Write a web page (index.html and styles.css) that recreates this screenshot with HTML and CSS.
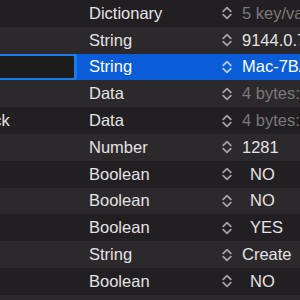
FILE: index.html
```html
<!DOCTYPE html>
<html>
<head>
<meta charset="utf-8">
<link rel="stylesheet" href="styles.css">
</head>
<body>
<div class="table">
  <div class="row even"><div class="key"></div><div class="type">Dictionary</div><div class="step"><svg viewBox="0 0 10 14"><path d="M1.2 5.4 L5 1.6 L8.8 5.4 M1.2 8.6 L5 12.4 L8.8 8.6"/></svg></div><div class="val dim">5 key/value pairs</div></div>
  <div class="row odd"><div class="key"></div><div class="type">String</div><div class="step"><svg viewBox="0 0 10 14"><path d="M1.2 5.4 L5 1.6 L8.8 5.4 M1.2 8.6 L5 12.4 L8.8 8.6"/></svg></div><div class="val">9144.0.7</div></div>
  <div class="row sel"><div class="key"><div class="field"></div></div><div class="type">String</div><div class="step"><svg viewBox="0 0 10 14"><path d="M1.2 5.4 L5 1.6 L8.8 5.4 M1.2 8.6 L5 12.4 L8.8 8.6"/></svg></div><div class="val">Mac-7BA5B2D9E42DDD94</div></div>
  <div class="row odd"><div class="key"></div><div class="type">Data</div><div class="step"><svg viewBox="0 0 10 14"><path d="M1.2 5.4 L5 1.6 L8.8 5.4 M1.2 8.6 L5 12.4 L8.8 8.6"/></svg></div><div class="val dim">4 bytes: 0x00000000</div></div>
  <div class="row even"><div class="key"><span class="keytext">Lock</span></div><div class="type">Data</div><div class="step"><svg viewBox="0 0 10 14"><path d="M1.2 5.4 L5 1.6 L8.8 5.4 M1.2 8.6 L5 12.4 L8.8 8.6"/></svg></div><div class="val dim">4 bytes: 0x00000000</div></div>
  <div class="row odd"><div class="key"></div><div class="type">Number</div><div class="step"><svg viewBox="0 0 10 14"><path d="M1.2 5.4 L5 1.6 L8.8 5.4 M1.2 8.6 L5 12.4 L8.8 8.6"/></svg></div><div class="val">1281</div></div>
  <div class="row even"><div class="key"></div><div class="type">Boolean</div><div class="step"><svg viewBox="0 0 10 14"><path d="M1.2 5.4 L5 1.6 L8.8 5.4 M1.2 8.6 L5 12.4 L8.8 8.6"/></svg></div><div class="val bool">NO</div></div>
  <div class="row odd"><div class="key"></div><div class="type">Boolean</div><div class="step"><svg viewBox="0 0 10 14"><path d="M1.2 5.4 L5 1.6 L8.8 5.4 M1.2 8.6 L5 12.4 L8.8 8.6"/></svg></div><div class="val bool">NO</div></div>
  <div class="row even"><div class="key"></div><div class="type">Boolean</div><div class="step"><svg viewBox="0 0 10 14"><path d="M1.2 5.4 L5 1.6 L8.8 5.4 M1.2 8.6 L5 12.4 L8.8 8.6"/></svg></div><div class="val bool">YES</div></div>
  <div class="row odd"><div class="key"></div><div class="type">String</div><div class="step"><svg viewBox="0 0 10 14"><path d="M1.2 5.4 L5 1.6 L8.8 5.4 M1.2 8.6 L5 12.4 L8.8 8.6"/></svg></div><div class="val">Create</div></div>
  <div class="row even"><div class="key"></div><div class="type">Boolean</div><div class="step"><svg viewBox="0 0 10 14"><path d="M1.2 5.4 L5 1.6 L8.8 5.4 M1.2 8.6 L5 12.4 L8.8 8.6"/></svg></div><div class="val bool">NO</div></div>
  <div class="row odd short"></div>
</div>
</body>
</html>
```

FILE: styles.css
```css
html, body {
  margin: 0;
  padding: 0;
  background: #221f22;
  overflow: hidden;
  width: 300px;
  height: 300px;
}
.table {
  font-family: "Liberation Sans", Arial, sans-serif;
  font-size: 16.5px;
  color: #e4e2e4;
  height: 300px;
  overflow: hidden;
}
.row {
  display: grid;
  grid-template-columns: 78px 133px 31px 1fr;
  height: 26.8px;
  align-items: center;
  white-space: nowrap;
}
.short { height: 5.2px; }
.even { background: #221f22; }
.odd { background: #2c292c; }
.sel { background: #0a5cd8; color: #ffffff; }
.key {
  height: 100%;
  position: relative;
  overflow: hidden;
  display: flex;
  align-items: center;
}
.keytext {
  margin-left: -25px;
}
.field {
  position: absolute;
  left: -4px;
  right: 1px;
  top: -1px;
  bottom: -1px;
  background: #1e1d1d;
  border: 3px solid #1a7ceb;
  border-radius: 4px;
  box-sizing: border-box;
}
.type {
  padding-left: 11px;
  overflow: hidden;
}
.step {
  padding-left: 11px;
  display: flex;
  align-items: center;
}
.step svg {
  width: 10px;
  height: 14px;
  fill: none;
  stroke: #a3a1a3;
  stroke-width: 1.8;
  stroke-linecap: round;
  stroke-linejoin: round;
}
.sel .step svg { stroke: #b4cdf4; }
.val {
  overflow: hidden;
}
.dim { color: #7a787a; }
.bool { padding-left: 8px; }
```
